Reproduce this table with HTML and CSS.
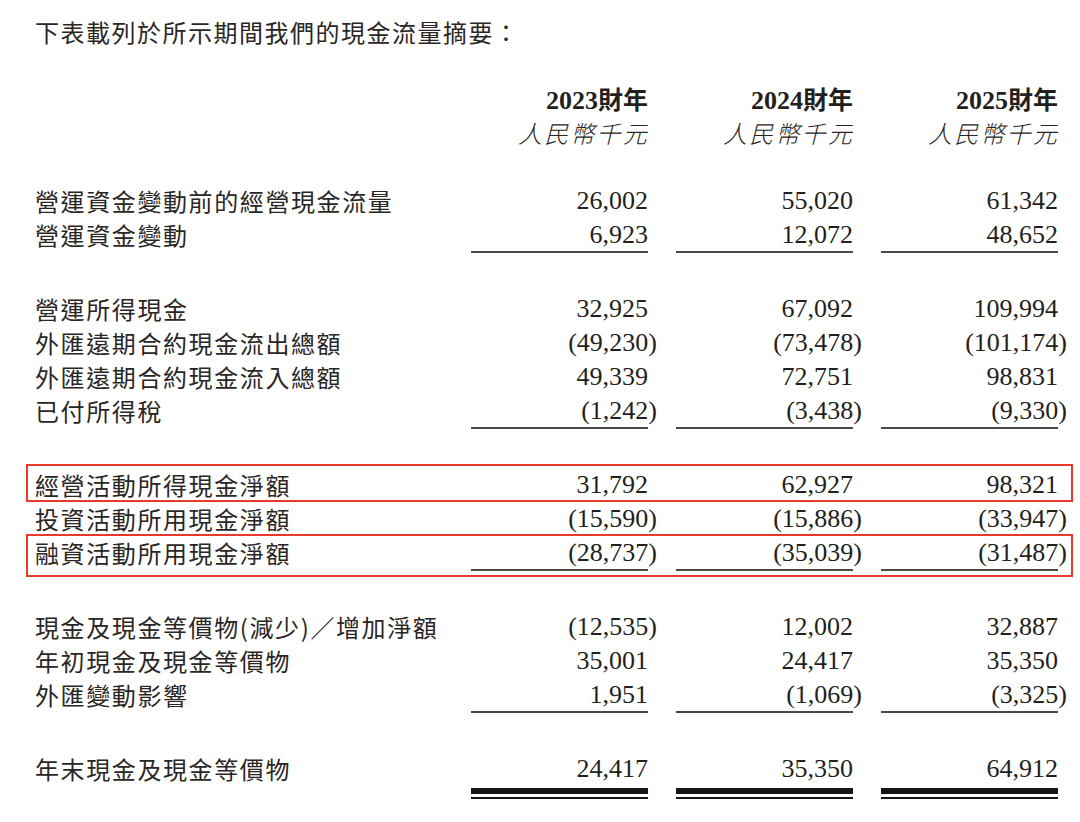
FILE: index.html
```html
<!DOCTYPE html>
<html lang="zh-Hant">
<head>
<meta charset="utf-8">
<link rel="stylesheet" href="styles.css">
</head>
<body>
<div class="page">
  <p class="intro">下表載列於所示期間我們的現金流量摘要：</p>

  <div class="table">
    <div class="head">
      <div class="label"></div>
      <div class="hcell"><span class="yr"><b>2023</b>財年</span><span class="unit">人民幣千元</span></div>
      <div class="hcell"><span class="yr"><b>2024</b>財年</span><span class="unit">人民幣千元</span></div>
      <div class="hcell"><span class="yr"><b>2025</b>財年</span><span class="unit">人民幣千元</span></div>
    </div>

    <div class="group first">
      <div class="row">
        <div class="label">營運資金變動前的經營現金流量</div>
        <div class="num">26,002</div><div class="num">55,020</div><div class="num">61,342</div>
      </div>
      <div class="row ruled">
        <div class="label">營運資金變動</div>
        <div class="num">6,923</div><div class="num">12,072</div><div class="num">48,652</div>
      </div>
    </div>

    <div class="group">
      <div class="row">
        <div class="label">營運所得現金</div>
        <div class="num">32,925</div><div class="num">67,092</div><div class="num">109,994</div>
      </div>
      <div class="row">
        <div class="label">外匯遠期合約現金流出總額</div>
        <div class="num">(49,230<span class="cp">)</span></div><div class="num">(73,478<span class="cp">)</span></div><div class="num">(101,174<span class="cp">)</span></div>
      </div>
      <div class="row">
        <div class="label">外匯遠期合約現金流入總額</div>
        <div class="num">49,339</div><div class="num">72,751</div><div class="num">98,831</div>
      </div>
      <div class="row ruled">
        <div class="label">已付所得稅</div>
        <div class="num">(1,242<span class="cp">)</span></div><div class="num">(3,438<span class="cp">)</span></div><div class="num">(9,330<span class="cp">)</span></div>
      </div>
    </div>

    <div class="group">
      <div class="row hl hl-a">
        <div class="label">經營活動所得現金淨額</div>
        <div class="num">31,792</div><div class="num">62,927</div><div class="num">98,321</div>
      </div>
      <div class="row">
        <div class="label">投資活動所用現金淨額</div>
        <div class="num">(15,590<span class="cp">)</span></div><div class="num">(15,886<span class="cp">)</span></div><div class="num">(33,947<span class="cp">)</span></div>
      </div>
      <div class="row ruled hl hl-b">
        <div class="label">融資活動所用現金淨額</div>
        <div class="num">(28,737<span class="cp">)</span></div><div class="num">(35,039<span class="cp">)</span></div><div class="num">(31,487<span class="cp">)</span></div>
      </div>
    </div>

    <div class="group">
      <div class="row">
        <div class="label">現金及現金等價物(減少)／增加淨額</div>
        <div class="num">(12,535<span class="cp">)</span></div><div class="num">12,002</div><div class="num">32,887</div>
      </div>
      <div class="row">
        <div class="label">年初現金及現金等價物</div>
        <div class="num">35,001</div><div class="num">24,417</div><div class="num">35,350</div>
      </div>
      <div class="row ruled">
        <div class="label">外匯變動影響</div>
        <div class="num">1,951</div><div class="num">(1,069<span class="cp">)</span></div><div class="num">(3,325<span class="cp">)</span></div>
      </div>
    </div>

    <div class="group">
      <div class="row">
        <div class="label">年末現金及現金等價物</div>
        <div class="num">24,417</div><div class="num">35,350</div><div class="num">64,912</div>
      </div>
      <div class="double">
        <div class="label"></div>
        <div class="dbl"></div><div class="dbl"></div><div class="dbl"></div>
      </div>
    </div>
  </div>
</div>
</body>
</html>
```

FILE: styles.css
```css
html, body {
  margin: 0;
  padding: 0;
  background: #ffffff;
}

.page {
  padding: 15px 0 0 35px;
  color: #231f20;
  font-family: "Noto Sans CJK TC", "Noto Sans CJK SC", sans-serif;
}

.intro {
  margin: 0;
  font-size: 24px;
  line-height: 34px;
  letter-spacing: 1.5px;
  font-weight: 400;
  color: #2a2626;
}

.table {
  width: 1023px;
  margin-top: 36px;
}

.head,
.row,
.double {
  display: flex;
}

.label {
  width: 408px;
  flex: none;
  font-size: 24px;
  letter-spacing: 1.6px;
  line-height: 33.7px;
  color: #2a2626;
  white-space: nowrap;
}

.hcell {
  width: 177px;
  margin-left: 28px;
  display: flex;
  flex-direction: column;
  align-items: flex-end;
}

.yr {
  font-family: "Liberation Serif", "Noto Sans CJK TC", serif;
  font-size: 25px;
  line-height: 32px;
  font-weight: 700;
}

.yr b {
  font-size: 26px;
}

.unit {
  font-size: 24px;
  line-height: 32px;
  font-style: italic;
  letter-spacing: 2.2px;
  margin-right: -1px;
  color: #2a2626;
  font-weight: 300;
}

.group {
  margin-top: 39px;
}

.group.first {
  margin-top: 35px;
}

.num {
  width: 177px;
  margin-left: 28px;
  flex: none;
  text-align: right;
  font-family: "Liberation Serif", serif;
  font-size: 26px;
  line-height: 33.7px;
  white-space: nowrap;
}

.cp {
  margin-right: -9px;
}

.row.ruled .num {
  border-bottom: 2px solid #4a4a4a;
}

.row.hl {
  position: relative;
}

.row.hl::after {
  content: "";
  position: absolute;
  left: -9px;
  right: -15px;
  border: 2px solid #e8392a;
  pointer-events: none;
}

.row.hl-a::after {
  top: -4px;
  bottom: 0;
}

.row.hl-b::after {
  top: -2px;
  bottom: -6px;
}

.double {
  margin-top: 2px;
}

.dbl {
  width: 177px;
  margin-left: 28px;
  height: 3px;
  border-top: 6px solid #1a1617;
  border-bottom: 2px solid #1a1617;
}
```
